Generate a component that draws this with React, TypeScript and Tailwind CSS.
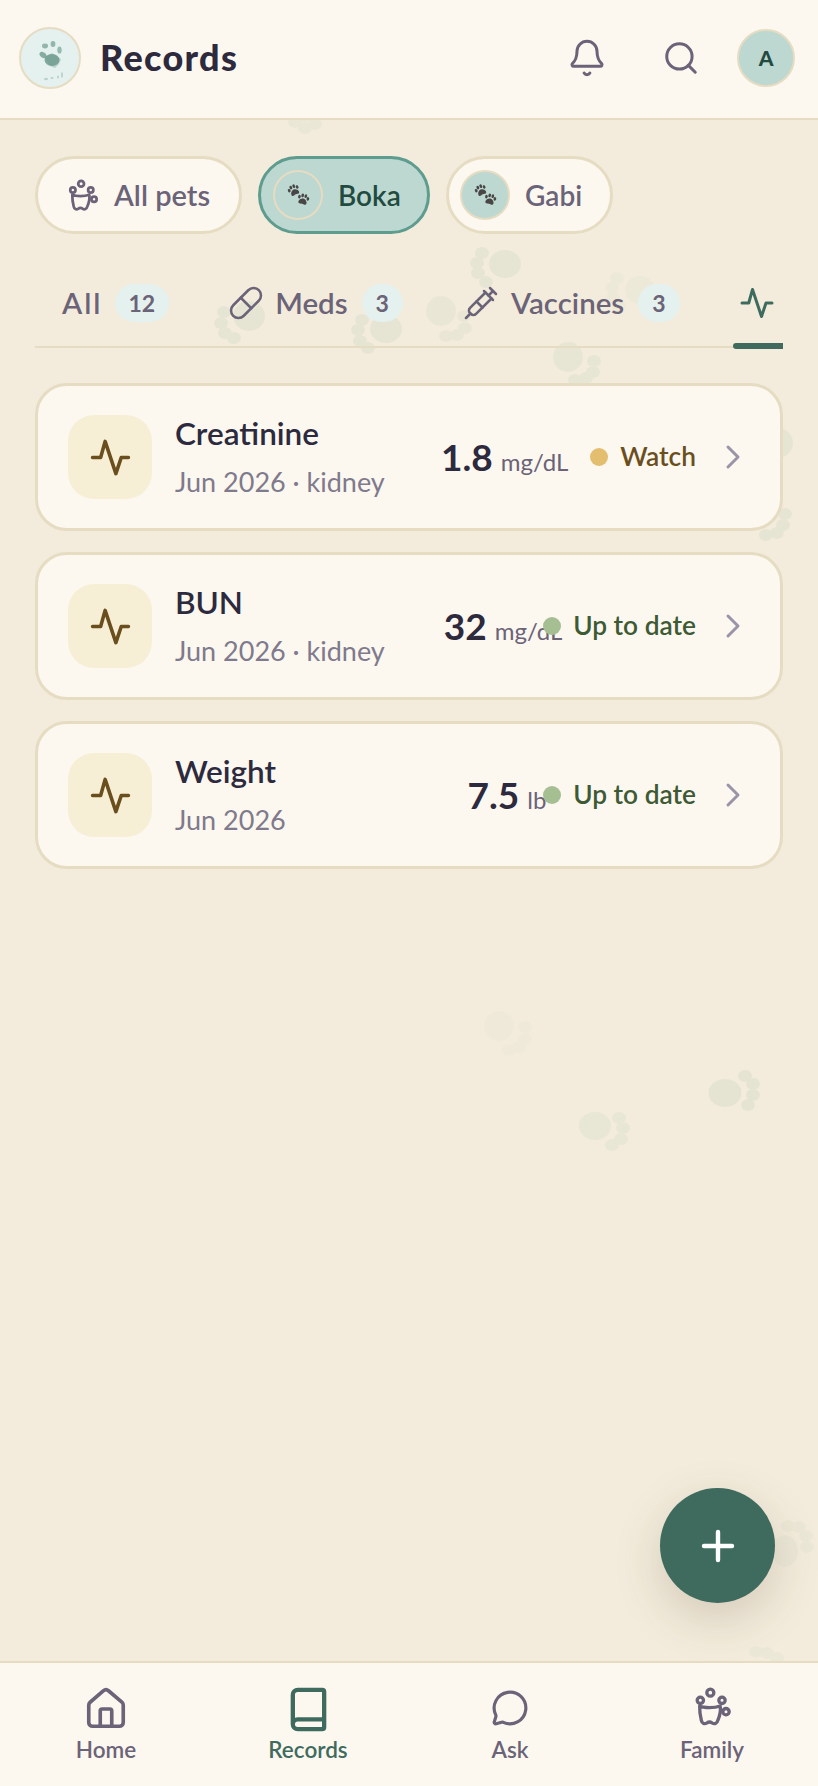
import { Bell, Book, ChevronRight, House, MessageCircle, Pill, Plus, Search, Syringe } from 'lucide-react'
import type { ReactNode } from 'react'

type PawSpot = {
  pad: [number, number, number, number]
  toes: [number, number][]
  opacity: number
}

const pawSpots: PawSpot[] = [
  { pad: [249, 316, 16, 15], toes: [[224, 312], [221, 323], [225, 333], [234, 338]], opacity: 0.42 },
  { pad: [386, 329, 16, 14], toes: [[362, 320], [358, 330], [360, 341], [368, 348]], opacity: 0.42 },
  { pad: [505, 264, 16, 14], toes: [[482, 253], [477, 263], [478, 273], [486, 282]], opacity: 0.42 },
  { pad: [441, 311, 15, 15], toes: [[464, 316], [465, 328], [457, 335], [446, 336]], opacity: 0.32 },
  { pad: [568, 357, 15, 15], toes: [[594, 361], [593, 372], [586, 378], [575, 380]], opacity: 0.38 },
  { pad: [640, 290, 15, 14], toes: [[617, 278], [612, 288], [613, 298], [619, 306]], opacity: 0.18 },
  { pad: [305, 108, 15, 14], toes: [[295, 122], [305, 128], [315, 124]], opacity: 0.25 },
  { pad: [778, 443, 15, 15], toes: [], opacity: 0.42 },
  { pad: [760, 500, 15, 15], toes: [[785, 514], [783, 525], [777, 533], [766, 535]], opacity: 0.42 },
  { pad: [499, 1026, 15, 15], toes: [[525, 1027], [525, 1039], [519, 1047], [509, 1050]], opacity: 0.14 },
  { pad: [725, 1093, 16.5, 14], toes: [[745, 1076], [753, 1084], [753, 1095], [748, 1105]], opacity: 0.45 },
  { pad: [595, 1126, 16, 14], toes: [[619, 1118], [623, 1128], [621, 1139], [612, 1145]], opacity: 0.36 },
  { pad: [785, 1551, 13, 16], toes: [[788, 1526], [799, 1527], [806, 1536], [807, 1547]], opacity: 0.22 },
  { pad: [766, 1675, 14, 14], toes: [[756, 1652], [767, 1653], [777, 1658]], opacity: 0.22 },
]

function PawBackdrop() {
  return (
    <svg className="pointer-events-none absolute inset-0 h-full w-full" viewBox="0 0 818 1786" aria-hidden="true">
      {pawSpots.map((paw, i) => (
        <g key={i} fill="#d5dcc8" opacity={paw.opacity}>
          <ellipse cx={paw.pad[0]} cy={paw.pad[1]} rx={paw.pad[2]} ry={paw.pad[3]} />
          {paw.toes.map(([x, y], j) => (
            <ellipse key={j} cx={x} cy={y} rx={7} ry={6} />
          ))}
        </g>
      ))}
    </svg>
  )
}

function PetsIcon({ className }: { className: string }) {
  return (
    <svg className={className} viewBox="0 0 24 24" fill="none" stroke="currentColor" strokeWidth="2" strokeLinecap="round" strokeLinejoin="round">
      <circle cx="11" cy="3.4" r="2.1" />
      <circle cx="5" cy="8" r="1.9" />
      <circle cx="18" cy="8" r="1.9" />
      <circle cx="20.4" cy="14.8" r="1.9" />
      <path d="M4.6 11.4c2.500 1.300 9 1.300 12.300 0 .6 2.800-.4 6.200-1.400 8.600-.5 2-2 2.500-3.500 1.500-1-.7-2-.7-3 0-1.500 1-3 .5-3.400-1.500-.6-2.500-1.100-5.600-1-8.600z" />
    </svg>
  )
}

function TinyPaw({ x, y, scale, rotate }: { x: number; y: number; scale: number; rotate: number }) {
  return (
    <g transform={`translate(${x} ${y}) rotate(${rotate}) scale(${scale})`}>
      <path d="M0 0c2.200 0 4.400 2.200 4.400 4.300 0 1.700-1.500 1.900-2.300 1.700-1.300-.4-2.900-.4-4.200 0-.8.2-2.300 0-2.300-1.700C-4.400 2.200-2.200 0 0 0z" />
      <ellipse cx="-4.6" cy="-0.8" rx="1.4" ry="1.9" />
      <ellipse cx="-1.7" cy="-3" rx="1.4" ry="2" />
      <ellipse cx="1.7" cy="-3" rx="1.4" ry="2" />
      <ellipse cx="4.6" cy="-0.8" rx="1.4" ry="1.9" />
    </g>
  )
}

function PawPair() {
  return (
    <svg className="h-[24px] w-[24px]" viewBox="0 0 24 24" fill="#4a4646" aria-hidden="true">
      <TinyPaw x={7.5} y={6.5} scale={0.95} rotate={-25} />
      <TinyPaw x={17.5} y={15.5} scale={0.95} rotate={15} />
    </svg>
  )
}

function Logo() {
  return (
    <div className="flex h-[62px] w-[62px] items-center justify-center rounded-full border-2 border-[#e6dcc2] bg-[#e5f1ee]">
      <svg className="h-[46px] w-[46px] blur-[0.5px]" viewBox="0 0 46 46" aria-hidden="true">
        <g fill="#6f9c8e">
          <ellipse cx="25" cy="25" rx="7.5" ry="6" opacity="0.85" />
          <path d="M17 22l8-4 9 6-2 5-4 4-5-2-3-5z" opacity="0.35" />
          <ellipse cx="16" cy="20" rx="3.8" ry="2.6" transform="rotate(35 16 20)" opacity="0.8" />
          <ellipse cx="18" cy="11" rx="3" ry="2.4" opacity="0.7" />
          <ellipse cx="26" cy="9" rx="2.4" ry="3" opacity="0.7" />
          <ellipse cx="32.5" cy="15" rx="2.2" ry="3.6" opacity="0.65" />
        </g>
        <g fill="#a9c6bc" opacity="0.7">
          <ellipse cx="19" cy="44" rx="2" ry="1.2" />
          <ellipse cx="25" cy="43" rx="1.6" ry="1" />
          <ellipse cx="35" cy="40" rx="1" ry="3" />
          <ellipse cx="31" cy="42" rx="1" ry="1.5" />
        </g>
      </svg>
    </div>
  )
}

function Header() {
  return (
    <header className="relative z-10 flex h-[120px] shrink-0 items-center border-b-2 border-[#e6dcc2] bg-[#fcf8f0] pb-[2px] pl-[19px] pr-[23px]">
      <Logo />
      <h1 className="ml-[19px] flex-1 pb-[2px] text-[36px] font-black tracking-[1.3px] text-[#2d2a3e]">Records</h1>
      <button type="button" aria-label="Notifications" className="text-[#6b6378]">
        <Bell className="h-[40px] w-[40px]" strokeWidth={1.8} />
      </button>
      <button type="button" aria-label="Search" className="ml-[55px] text-[#6b6378]">
        <Search className="h-[38px] w-[38px]" strokeWidth={1.9} />
      </button>
      <div className="ml-[37px] flex h-[58px] w-[58px] items-center justify-center rounded-full border-2 border-[#e6dcc2] bg-[#bcd8d0] text-[21px] font-black text-[#234a40]">
        A
      </div>
    </header>
  )
}

function PetChips() {
  return (
    <div className="flex gap-[16px]">
      <button type="button" className="flex h-[78px] w-[207px] items-center gap-[15px] rounded-full border-[3px] border-[#e6dcc2] bg-[#fcf8f0] pl-[28px] text-[29px] font-semibold text-[#6b6378]">
        <PetsIcon className="h-[33px] w-[33px]" />
        All pets
      </button>
      <button type="button" className="flex h-[78px] w-[172px] items-center gap-[15px] rounded-full border-[3px] border-[#5d9c8e] bg-[#bcd8d0] pl-[12px] text-[28px] font-semibold text-[#234a40]">
        <span className="flex h-[50px] w-[50px] items-center justify-center rounded-full border-2 border-[#e6dcc2]">
          <PawPair />
        </span>
        Boka
      </button>
      <button type="button" className="flex h-[78px] w-[167px] items-center gap-[15px] rounded-full border-[3px] border-[#e6dcc2] bg-[#fcf8f0] pl-[11px] text-[28px] font-semibold text-[#6b6378]">
        <span className="flex h-[50px] w-[50px] items-center justify-center rounded-full border-2 border-[#e6dcc2] bg-[#bcd8d0]">
          <PawPair />
        </span>
        Gabi
      </button>
    </div>
  )
}

function CountBadge({ children }: { children: ReactNode }) {
  return (
    <span className="ml-[14px] flex h-[38px] min-w-[41px] items-center justify-center rounded-full bg-[#e5f1ee] px-[14px] text-[23px] font-bold text-[#6b6378]">
      {children}
    </span>
  )
}

function ActivityIcon({ className }: { className: string }) {
  return (
    <svg className={className} viewBox="0 0 24 24" fill="none" stroke="currentColor" strokeWidth="2" strokeLinecap="round" strokeLinejoin="round">
      <path d="M2 12h4.500L9 3l6 18 3-9h4" />
    </svg>
  )
}

function TabBar() {
  return (
    <div className="mt-[29px] flex h-[85px] items-stretch border-b-2 border-[#e6dcc2] text-[29.5px] font-semibold text-[#6b6378]">
      <div className="flex items-center pb-[3px] pl-[27px]">
        <span className="-mr-[2px] tracking-[2px]">All</span>
        <CountBadge>12</CountBadge>
      </div>
      <div className="ml-[59px] flex items-center pb-[3px]">
        <Pill className="mr-[11px] h-[36px] w-[36px]" strokeWidth={1.7} />
        Meds
        <CountBadge>3</CountBadge>
      </div>
      <div className="ml-[60px] flex items-center pb-[3px]">
        <Syringe className="mr-[12px] h-[36px] w-[36px]" strokeWidth={1.7} />
        Vaccines
        <CountBadge>3</CountBadge>
      </div>
      <div className="relative ml-[53px] flex flex-1 items-center pb-[3px] pl-[6px] text-[#3f6b5e]">
        <ActivityIcon className="h-[36px] w-[36px]" />
        <span className="absolute -bottom-[3px] left-0 right-0 h-[6px] rounded-l-full bg-[#3f6b5e]" />
      </div>
    </div>
  )
}

type RecordRow = {
  title: string
  sub: string
  value: string
  unit: string
  status: string
  tone: 'watch' | 'ok'
}

const records: RecordRow[] = [
  { title: 'Creatinine', sub: 'Jun 2026 · kidney', value: '1.8', unit: 'mg/dL', status: 'Watch', tone: 'watch' },
  { title: 'BUN', sub: 'Jun 2026 · kidney', value: '32', unit: 'mg/dL', status: 'Up to date', tone: 'ok' },
  { title: 'Weight', sub: 'Jun 2026', value: '7.5', unit: 'lb', status: 'Up to date', tone: 'ok' },
]

function RecordCard({ record }: { record: RecordRow }) {
  const watch = record.tone === 'watch'
  return (
    <div className="flex h-[148px] items-center rounded-[32px] border-[3px] border-[#e6dcc2] bg-[#fcf8f0] pl-[30px] pr-[27px]">
      <div className="flex h-[84px] w-[84px] shrink-0 items-center justify-center rounded-[26px] bg-[#f6efd6] text-[#6b4e1e]">
        <ActivityIcon className="h-[43px] w-[43px]" />
      </div>
      <div className="ml-[23px] min-w-0 flex-1">
        <div className="text-[31.5px] font-semibold leading-[38px] text-[#2d2a3e]">{record.title}</div>
        <div className="mt-[11px] text-[27px] leading-[38px] text-[#7f7a8c]">{record.sub}</div>
      </div>
      <div className={record.unit === 'lb' ? 'w-[124px] shrink-0 whitespace-nowrap pl-[8px] text-center text-[#2d2a3e]' : 'w-[124px] shrink-0 whitespace-nowrap text-center text-[#2d2a3e]'}>
        <span className="text-[37px] font-bold">{record.value}</span>
        <span className="ml-[8px] text-[24px] text-[#6b6378]">{record.unit}</span>
      </div>
      <div className="relative ml-[27px] flex w-[104px] shrink-0 items-center justify-end gap-[12px] whitespace-nowrap">
        <span className={watch ? 'h-[18px] w-[18px] shrink-0 rounded-full bg-[#e3be6e]' : 'h-[18px] w-[18px] shrink-0 rounded-full bg-[#a5bf93]'} />
        <span className={watch ? 'text-[26.3px] font-semibold text-[#6b4e1e]' : 'text-[26.3px] font-semibold text-[#3e5a35]'}>{record.status}</span>
      </div>
      <ChevronRight className="ml-[17px] h-[40px] w-[40px] shrink-0 text-[#9a94a8]" strokeWidth={1.8} />
    </div>
  )
}

function BottomNav() {
  return (
    <nav className="relative z-10 grid h-[125px] shrink-0 grid-cols-4 border-t-2 border-[#e6dcc2] bg-[#fcf8f0] px-[5px] pt-[22px]">
      <div className="flex flex-col items-center text-[#6b6378]">
        <div className="flex h-[48px] items-center justify-center">
          <House className="h-[46px] w-[46px]" strokeWidth={1.9} />
        </div>
        <span className="mt-[3px] text-[22.5px] font-semibold leading-[28px]">Home</span>
      </div>
      <div className="flex flex-col items-center text-[#3f6b5e]">
        <div className="flex h-[48px] items-center justify-center">
          <Book className="h-[47px] w-[47px]" strokeWidth={2.2} />
        </div>
        <span className="mt-[3px] text-[22.5px] font-semibold leading-[28px]">Records</span>
      </div>
      <div className="flex flex-col items-center text-[#6b6378]">
        <div className="flex h-[48px] items-center justify-center pb-[3px]">
          <MessageCircle className="h-[38px] w-[38px]" strokeWidth={2} />
        </div>
        <span className="mt-[3px] text-[22.5px] font-semibold leading-[28px]">Ask</span>
      </div>
      <div className="flex flex-col items-center text-[#6b6378]">
        <div className="flex h-[48px] items-center justify-center pb-[4px]">
          <PetsIcon className="h-[40px] w-[40px]" />
        </div>
        <span className="mt-[3px] text-[22.5px] font-semibold leading-[28px]">Family</span>
      </div>
    </nav>
  )
}

export default function App() {
  return (
    <div className="relative flex h-[1786px] w-[818px] flex-col overflow-hidden bg-[#f3ecdc] font-['Lato','Noto_Sans',sans-serif]">
      <PawBackdrop />
      <Header />
      <main className="relative flex-1 px-[35px] pt-[36px]">
        <PetChips />
        <TabBar />
        <div className="mt-[35px] flex flex-col gap-[21px]">
          {records.map((record) => (
            <RecordCard key={record.title} record={record} />
          ))}
        </div>
      </main>
      <button
        type="button"
        aria-label="Add record"
        className="absolute bottom-[183px] right-[43px] z-20 flex h-[115px] w-[115px] items-center justify-center rounded-full bg-[#3f6b5e] text-white shadow-[0_16px_48px_rgba(70,50,30,0.18)]"
      >
        <Plus className="h-[48px] w-[48px]" strokeWidth={2.2} />
      </button>
      <BottomNav />
    </div>
  )
}
